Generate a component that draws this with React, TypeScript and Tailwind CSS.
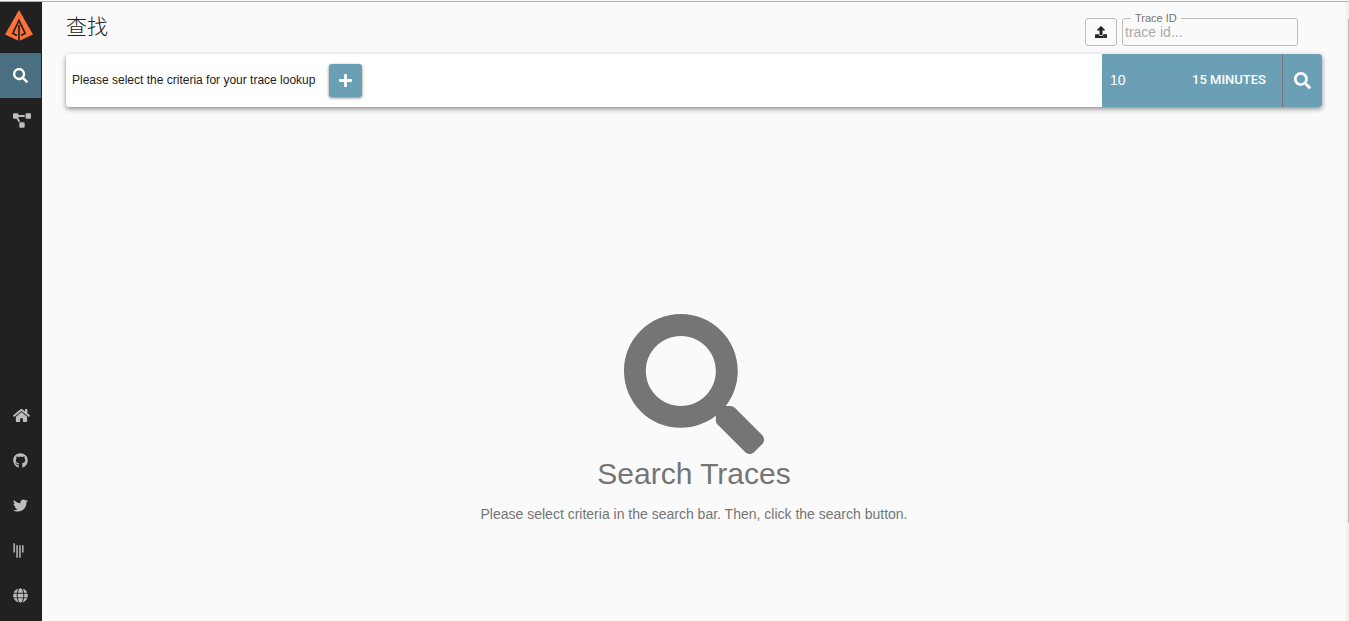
import type { ReactNode } from 'react';
import {
  FaGithub,
  FaGitter,
  FaGlobe,
  FaHome,
  FaPlus,
  FaProjectDiagram,
  FaSearch,
  FaTwitter,
  FaUpload,
} from 'react-icons/fa';

function Logo() {
  return (
    <svg viewBox="0 0 28 31" className="h-[31px] w-7" aria-hidden="true">
      <path fill="#fe7139" d="M14 0 28 24.500 14 31 0 24.500Z" />
      <path
        fill="none"
        stroke="#212121"
        strokeWidth="1.700"
        d="M12 25.500 7.800 23.300 14 10.500 20.200 23.300 16 25.500"
      />
      <path fill="none" stroke="#212121" strokeWidth="1.700" d="M14 15V31" />
    </svg>
  );
}

type NavItemProps = { label: string; active?: boolean; children: ReactNode };

function NavItem({ label, active = false, children }: NavItemProps) {
  return (
    <a
      href="#"
      aria-label={label}
      className={
        active
          ? 'mr-px flex h-[45px] items-center bg-[#4a6f80] pl-[13px] text-white'
          : 'flex h-[45px] items-center pl-[13px] text-[#bdbdbd]'
      }
    >
      {children}
    </a>
  );
}

function Sidebar() {
  return (
    <nav className="flex w-[42px] shrink-0 flex-col justify-between bg-[#212121] pb-[3px]">
      <div>
        <a href="#" aria-label="Zipkin" className="flex h-[51px] items-center pb-1 pl-[5px]">
          <Logo />
        </a>
        <NavItem label="Search" active>
          <FaSearch className="size-[15px]" />
        </NavItem>
        <NavItem label="Dependencies">
          <FaProjectDiagram className="h-[15px] w-[18px]" />
        </NavItem>
      </div>
      <div>
        <NavItem label="Home">
          <FaHome className="h-[15px] w-[17px]" />
        </NavItem>
        <NavItem label="GitHub">
          <FaGithub className="size-[15px]" />
        </NavItem>
        <NavItem label="Twitter">
          <FaTwitter className="size-[15px]" />
        </NavItem>
        <NavItem label="Gitter">
          <FaGitter className="h-[15px] w-[11px]" />
        </NavItem>
        <NavItem label="Language">
          <FaGlobe className="size-[15px]" />
        </NavItem>
      </div>
    </nav>
  );
}

function Header() {
  return (
    <header className="flex h-[52px] items-start justify-between pr-6">
      <h1 className="pt-[9px] text-[21px] leading-8 font-light text-[#212121]">查找</h1>
      <div className="flex items-end gap-[5px] pt-2.5">
        <button
          type="button"
          aria-label="Upload JSON"
          className="flex h-7 w-8 items-center justify-center rounded-[3px] border border-[#bdbdbd] text-xs text-[#212121]"
        >
          <FaUpload />
        </button>
        <fieldset className="h-[34px] w-44 rounded-[3px] border border-[#bdbdbd] pl-0.5">
          <legend className="ml-1.5 px-1 text-[11px] leading-3 text-[#757575]">
            <label htmlFor="trace-id">Trace ID</label>
          </legend>
          <input
            id="trace-id"
            type="text"
            placeholder="trace id..."
            className="block h-4 w-full bg-transparent text-sm text-[#212121] outline-none placeholder:text-[#aaaaaa]"
          />
        </fieldset>
      </div>
    </header>
  );
}

function SearchBar() {
  return (
    <form className="flex h-[53px] rounded-[3px] bg-white shadow-[0_2px_5px_rgba(0,0,0,0.45)]">
      <div className="flex flex-1 items-center gap-0.5 pl-1.5">
        <p className="min-w-[255px] pb-0.5 text-xs text-[#212121]">
          Please select the criteria for your trace lookup
        </p>
        <button
          type="button"
          aria-label="Add criterion"
          className="flex h-[33px] w-[33px] items-center justify-center rounded-[3px] bg-[#6b9fb6] text-[15px] text-white shadow-[0_1px_3px_rgba(0,0,0,0.5)]"
        >
          <FaPlus />
        </button>
      </div>
      <div className="flex rounded-r-[3px] bg-[#6b9fb6] text-white">
        <input
          type="text"
          aria-label="Limit"
          defaultValue="10"
          className="w-20 bg-transparent pb-0.5 pl-2 text-sm outline-none"
        />
        <button
          type="button"
          className="w-[100px] pr-4 pb-0.5 text-right font-[Roboto,sans-serif] text-[13px] font-medium"
        >
          15 MINUTES
        </button>
        <button
          type="submit"
          aria-label="Run query"
          className="flex w-10 items-center justify-center border-l border-[#757575] text-[17px]"
        >
          <FaSearch />
        </button>
      </div>
    </form>
  );
}

export default function App() {
  return (
    <div className="flex min-h-screen flex-col bg-[#fafafa] pt-px font-['Liberation_Sans','Noto_Sans_CJK_SC',sans-serif]">
      <div className="flex flex-1 border-t border-[#b0b0b0]">
        <Sidebar />
        <main className="flex flex-1 flex-col pr-6 pl-6">
          <Header />
          <SearchBar />
          <section className="flex flex-1 flex-col items-center justify-end pb-[97px] text-[#757575]">
            <FaSearch className="size-[140px]" />
            <h2 className="text-[30px] leading-10">Search Traces</h2>
            <p className="mt-2.5 text-sm">
              Please select criteria in the search bar. Then, click the search button.
            </p>
          </section>
        </main>
        <div className="flex w-[3px] flex-col items-end bg-[#f1f1f1] pt-[17px]" aria-hidden="true">
          <div className="h-[504px] w-px bg-[#c1c1c1]" />
        </div>
      </div>
    </div>
  );
}
